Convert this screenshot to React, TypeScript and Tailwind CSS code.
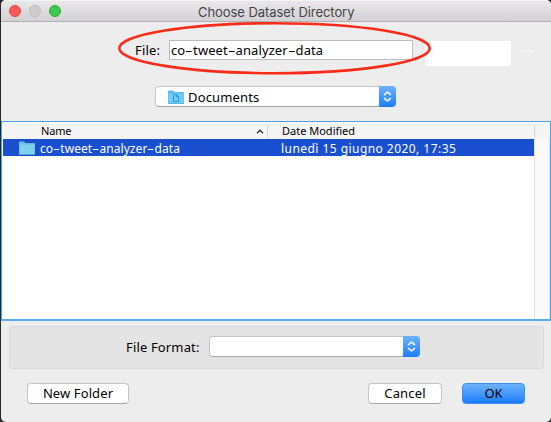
import React from 'react';

function Stepper() {
  return (
    <span className="flex w-[17px] h-full shrink-0 items-center justify-center rounded-r-[4px] bg-gradient-to-b from-[#6bb3fa] to-[#1a7bff]">
      <svg width="9" height="13" viewBox="0 0 9 13" fill="none" stroke="#fff" strokeWidth="1.5" strokeLinecap="round" strokeLinejoin="round">
        <path d="M1.5 4.6 4.5 2 7.5 4.6M1.5 8.4 4.5 11 7.5 8.4" />
      </svg>
    </span>
  );
}

function Folder({ page = false }: { page?: boolean }) {
  return (
    <svg width="16" height="14" viewBox="0 0 16 14" className="shrink-0">
      <path d="M0 1.3Q0 .5.8.5H5.2L6.4 2H15.2Q16 2 16 2.8V13.5H0Z" fill={page ? '#5bbdeb' : '#69bfe2'} />
      <path d="M.5 3.5H15.5V13H.5Z" fill={page ? '#70cdfa' : '#7ed2ef'} />
      <path d="M0 13.5H16" stroke="#4ca9d5" strokeWidth=".8" />
      {page && <path d="M5.5 4.5H8.5L10.5 6.5V11.5H5.5ZM8.4 4.5V6.7H10.5" fill="none" stroke="#299bd3" strokeWidth="1" />}
    </svg>
  );
}

function FileName({ name }: { name: string }) {
  return (
    <>
      {name.split('-').map((part, i) => (
        <React.Fragment key={part}>
          {i > 0 && <span className="inline-block w-[0.6em] scale-x-[1.8] text-center">-</span>}
          {part}
        </React.Fragment>
      ))}
    </>
  );
}

function Button({ children, className }: { children: React.ReactNode; className: string }) {
  return <button className={`flex h-[21px] items-center justify-center rounded-[4px] border text-[13px] leading-none ${className}`}>{children}</button>;
}

const white = 'bg-white border-[#c4c4c4] border-b-[#a6a6a6]';

export default function App() {
  return (
    <div className="h-[422px] w-[551px] overflow-hidden bg-[#29272a] pl-px font-['Noto_Sans',sans-serif] text-[13px] text-black">
      <div className="relative flex h-[422px] w-[550px] flex-col overflow-hidden rounded-[5px] bg-[#ededed]">
        <header className="flex h-[22px] shrink-0 items-center border-t border-b border-t-[#f5f4f5] border-b-[#b1afb1] bg-gradient-to-b from-[#e9e7ea] to-[#d3d1d4] pl-2">
          <div className="flex w-[52px] gap-2">
            <i className="size-3 rounded-full border border-[#e2463f] bg-[#fc5b57]" />
            <i className="size-3 rounded-full border border-[#b9b9b9] bg-[#cdcdcd]" />
            <i className="size-3 rounded-full border border-[#2cac37] bg-[#3bc950]" />
          </div>
          <h1 className="ml-[137px] mt-px whitespace-nowrap font-['Inter',sans-serif] text-[13px] leading-4 tracking-[-0.07px] text-[#464446]">Choose Dataset Directory</h1>
        </header>

        <div className="flex h-[64px] shrink-0 items-start pt-[18px]">
          <label className="ml-[134px] w-[34px] whitespace-nowrap leading-5 tracking-[0.2px]">File:</label>
          <div className="h-5 w-[244px] whitespace-nowrap border border-[#bdbdbd] bg-white pl-px leading-[18px] tracking-[0.09px]">
            <FileName name="co-tweet-analyzer-data" />
          </div>
          <div className="mt-px ml-3 h-[25px] w-[86px] bg-white" />
          <div className="mt-[11px] ml-[11px] h-px w-[11px] bg-white" />
        </div>

        <div className="flex h-[35px] shrink-0">
          <div className="ml-[154px] flex h-[21px] w-[241px]">
            <div className={`flex flex-1 items-center rounded-l-[4px] border border-r-0 pl-3 ${white}`}>
              <Folder page />
              <span className="ml-1 leading-5 tracking-[0.15px]">Documents</span>
            </div>
            <Stepper />
          </div>
        </div>

        <main className="flex h-[200px] shrink-0 flex-col border border-b-2 border-[#4ba1dc] border-b-[#58acf5] bg-white pt-px pl-px">
          <div className="flex h-4 w-full shrink-0 items-center bg-[#f5f5f5] text-[11px] leading-4">
            <span className="ml-[38px] w-[215px] tracking-[-0.15px]">Name</span>
            <svg width="8" height="5" viewBox="0 0 8 5"><path d="M1 4.3 4 1.2 7 4.3" fill="none" stroke="#333" strokeWidth="1.3" /></svg>
            <span className="ml-[3px] h-3 w-px bg-[#d3d3d3]" />
            <span className="ml-[14px] w-[252px]">Date Modified</span>
            <span className="h-3 w-px bg-[#d3d3d3]" />
          </div>
          <div className="flex flex-1">
            <div className="w-[531px]">
              <div className="flex h-[17px] items-center bg-[#1a4fcf] text-[12px] text-white">
                <div className="ml-4"><Folder /></div>
                <span className="ml-[5px] w-[241px] whitespace-nowrap pt-0.5 leading-[17px] tracking-[0.06px]">
                  <FileName name="co-tweet-analyzer-data" />
                </span>
                <span className="whitespace-nowrap pt-0.5 leading-[17px] tracking-[0.45px]">lunedì 15 giugno 2020, 17:35</span>
              </div>
            </div>
            <div className="w-4 border-x border-[#e5e5e5] bg-[#fafafa]" />
          </div>
        </main>

        <section className="mt-[5px] ml-2 flex h-[43px] w-[535px] shrink-0 items-start rounded-[3px] border border-[#d8d8d8] bg-[#e4e4e4] pt-[9px]">
          <label className="ml-[116px] w-[83px] whitespace-nowrap pt-px leading-[21px] tracking-[0.15px]">File Format:</label>
          <div className="flex h-[21px] w-[211px]">
            <div className={`flex-1 rounded-l-[4px] border border-r-0 ${white}`} />
            <Stepper />
          </div>
        </section>

        <footer className="mt-[14px] flex h-[21px] shrink-0">
          <Button className={`ml-[26px] w-[102px] tracking-[0.1px] ${white}`}>New Folder</Button>
          <Button className={`ml-[239px] w-[74px] tracking-[0.15px] ${white}`}>Cancel</Button>
          <Button className="ml-5 w-[63px] border-[#3d91ee] bg-gradient-to-b from-[#6bb3fa] to-[#1a7bff]">OK</Button>
        </footer>

        <svg className="pointer-events-none absolute top-0 left-0" width="550" height="90" viewBox="1 0 550 90" fill="none">
          <ellipse cx="274.5" cy="48.2" rx="155.2" ry="25" stroke="#fa2b18" strokeWidth="2.6" />
        </svg>
      </div>
    </div>
  );
}
